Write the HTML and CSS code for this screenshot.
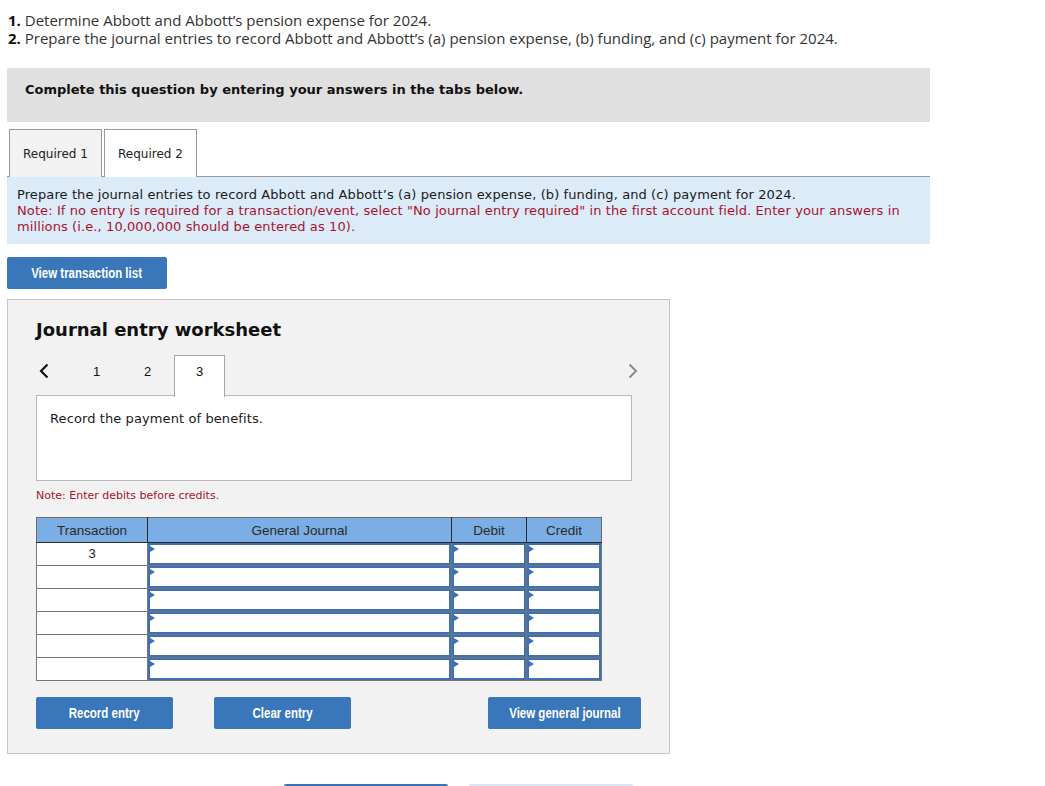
FILE: index.html
```html
<!DOCTYPE html>
<html lang="en">
<head>
    <meta charset="UTF-8">
    <meta name="viewport" content="width=device-width, initial-scale=1.0">
    <title>Journal entry worksheet</title>
    <link rel="stylesheet" href="styles.css">
</head>
<body>
<div class="page">

    <!-- Question text -->
    <div class="questions">
        <p><b>1.</b> Determine Abbott and Abbott’s pension expense for 2024.</p>
        <p><b>2.</b> Prepare the journal entries to record Abbott and Abbott’s (a) pension expense, (b) funding, and (c) payment for 2024.</p>
    </div>

    <div class="instructions-bar">Complete this question by entering your answers in the tabs below.</div>

    <!-- Required tabs -->
    <div class="tabs">
        <div class="tab">Required 1</div>
        <div class="tab active">Required 2</div>
    </div>

    <div class="prompt">
        <p>Prepare the journal entries to record Abbott and Abbott’s (a) pension expense, (b) funding, and (c) payment for 2024.</p>
        <p class="note">Note: If no entry is required for a transaction/event, select "No journal entry required" in the first account field. Enter your answers in millions (i.e., 10,000,000 should be entered as 10).</p>
    </div>

    <button class="btn btn-list"><span>View transaction list</span></button>

    <!-- Worksheet -->
    <div class="worksheet">
        <h2>Journal entry worksheet</h2>

        <div class="step-nav">
            <span class="arrow arrow-prev">
                <svg width="10" height="16" viewBox="0 0 10 16"><path d="M8.5 1.5 L2 8 L8.5 14.5" fill="none" stroke="#111" stroke-width="2.2"/></svg>
            </span>
            <span class="step">1</span>
            <span class="step">2</span>
            <span class="step active">3</span>
            <span class="arrow arrow-next">
                <svg width="10" height="16" viewBox="0 0 10 16"><path d="M1.5 1.5 L8 8 L1.5 14.5" fill="none" stroke="#8a8a8a" stroke-width="2"/></svg>
            </span>
        </div>

        <div class="description">Record the payment of benefits.</div>
        <p class="debit-note">Note: Enter debits before credits.</p>

        <table class="journal">
            <thead>
                <tr>
                    <th class="col-trans">Transaction</th>
                    <th class="col-account">General Journal</th>
                    <th class="col-amount">Debit</th>
                    <th class="col-amount">Credit</th>
                </tr>
            </thead>
            <tbody id="journalRows"></tbody>
        </table>

        <div class="actions">
            <button class="btn btn-record"><span>Record entry</span></button>
            <button class="btn btn-clear"><span>Clear entry</span></button>
            <button class="btn btn-view"><span>View general journal</span></button>
        </div>
    </div>

    <div class="bottom-nav">
        <span class="bottom-btn dark"></span>
        <span class="bottom-btn light"></span>
    </div>
</div>

<script>
    const rows = document.getElementById('journalRows');

    // six entry rows, only the first carries the transaction number
    for (let i = 0; i < 6; i++) {
        const tr = document.createElement('tr');
        tr.innerHTML =
            '<td class="trans">' + (i === 0 ? '3' : '') + '</td>' +
            '<td class="entry"><div class="field"></div></td>' +
            '<td class="entry"><div class="field"></div></td>' +
            '<td class="entry"><div class="field"></div></td>';
        rows.appendChild(tr);
    }
</script>
</body>
</html>
```

FILE: styles.css
```css
* {
  margin: 0;
  padding: 0;
  box-sizing: border-box;
}

body {
  background-color: #fff;
  color: #222;
  font-family: "DejaVu Sans", Verdana, sans-serif;
  overflow: hidden;
}

.page {
  padding: 11px 0 0 7px;
  width: 930px;
}

.questions {
  font-family: "Open Sans", "Liberation Sans", sans-serif;
  font-size: 15px;
  line-height: 18px;
  color: #333;
  padding-left: 1px;
}

.questions b {
  color: #111;
}

.instructions-bar {
  margin-top: 21px;
  height: 54px;
  background-color: #e0e0e0;
  padding: 14px 0 0 18px;
  font-size: 13px;
  line-height: 16px;
  font-weight: bold;
  color: #111;
}

/* Required tabs */
.tabs {
  margin-top: 7px;
  display: flex;
  gap: 2px;
  padding-left: 2px;
  border-bottom: 1px solid #9a9a9a;
  height: 48px;
}

.tab {
  width: 93px;
  height: 48px;
  border: 1px solid #9a9a9a;
  border-bottom: none;
  background-color: #f2f2f2;
  font-size: 12px;
  color: #222;
  display: flex;
  align-items: center;
  justify-content: center;
}

.tab.active {
  background-color: #fff;
}

.prompt {
  background-color: #dcebf8;
  padding: 10px 10px 9px 10px;
  font-size: 13px;
  line-height: 16px;
  letter-spacing: 0.1px;
  color: #1a1a1a;
}

.prompt .note,
.debit-note {
  color: #a8132d;
}

/* Buttons */
.btn {
  background-color: #3a76ba;
  color: #fff;
  border: none;
  border-radius: 2px;
  font-family: "Liberation Sans", Arial, sans-serif;
  font-weight: bold;
  font-size: 14px;
  cursor: pointer;
  height: 32px;
  display: flex;
  align-items: center;
  justify-content: center;
}

/* narrow face for the button labels */
.btn span {
  display: inline-block;
  transform: scaleX(0.82);
  white-space: nowrap;
}

.btn-list {
  margin-top: 13px;
  width: 160px;
}

/* Worksheet */
.worksheet {
  margin-top: 10px;
  width: 663px;
  background-color: #f2f2f2;
  border: 1px solid #c6c6c6;
  padding: 18px 0 24px 28px;
}

.worksheet h2 {
  font-size: 18px;
  font-weight: bold;
  color: #111;
  line-height: 24px;
}

.step-nav {
  margin-top: 13px;
  display: flex;
  align-items: flex-start;
  height: 41px;
  width: 595px;
  position: relative;
  z-index: 1;
}

.arrow {
  display: flex;
  padding-top: 8px;
}

.arrow-prev {
  width: 35px;
  padding-left: 3px;
}

.arrow-next {
  margin-left: auto;
  width: 10px;
  margin-right: -7px;
}

.step {
  width: 51px;
  text-align: center;
  padding-top: 9px;
  font-family: "Liberation Sans", Arial, sans-serif;
  font-size: 13px;
  line-height: 16px;
  color: #111;
}

.step.active {
  background-color: #fff;
  border: 1px solid #a6a6a6;
  border-bottom: none;
  margin-left: 1px;
  padding-top: 8px;
  height: 42px;
}

.description {
  width: 596px;
  height: 86px;
  margin-top: -1px;
  background-color: #fff;
  border: 1px solid #b8b8b8;
  padding: 15px 13px;
  font-size: 13px;
  letter-spacing: 0.1px;
  color: #1a1a1a;
}

.debit-note {
  font-size: 11px;
  margin-top: 8px;
  line-height: 14px;
}

/* Journal table */
.journal {
  margin-top: 14px;
  border-collapse: collapse;
  font-family: "Liberation Sans", Arial, sans-serif;
  font-size: 13px;
}

.journal th {
  background-color: #7aaee4;
  color: #2a2a2a;
  font-size: 13.5px;
  font-weight: normal;
  height: 25px;
  border: 1px solid #2b2b2b;
  border-top-color: #6b6b6b;
}

.journal th:first-child {
  border-left-color: #6b6b6b;
}

.journal th:last-child {
  border-right-color: #6b6b6b;
}

.col-trans {
  width: 111px;
}

.col-account {
  width: 304px;
}

.col-amount {
  width: 75px;
}

.journal td {
  height: 23px;
  border: 1px solid #777;
  background-color: #fff;
  padding: 0;
}

.journal td.trans {
  text-align: center;
  vertical-align: top;
  padding-top: 3px;
  color: #222;
}

.field {
  position: relative;
  height: 22px;
  border: 2px solid #3d71b3;
}

.field::before {
  content: '';
  position: absolute;
  top: 1px;
  left: 0;
  border-top: 3px solid transparent;
  border-bottom: 3px solid transparent;
  border-left: 5px solid #3d71b3;
}

.actions {
  margin-top: 16px;
  display: flex;
  width: 605px;
}

.btn-record,
.btn-clear {
  width: 137px;
}

.btn-clear {
  margin-left: 41px;
}

.btn-view {
  width: 153px;
  margin-left: auto;
}

.bottom-nav {
  margin-top: 30px;
  display: flex;
  gap: 21px;
  padding-left: 277px;
}

.bottom-btn {
  width: 164px;
  height: 20px;
  border-radius: 2px;
}

.bottom-btn.dark {
  background-color: #3a74b6;
}

.bottom-btn.light {
  background-color: #dce6f2;
}
```
